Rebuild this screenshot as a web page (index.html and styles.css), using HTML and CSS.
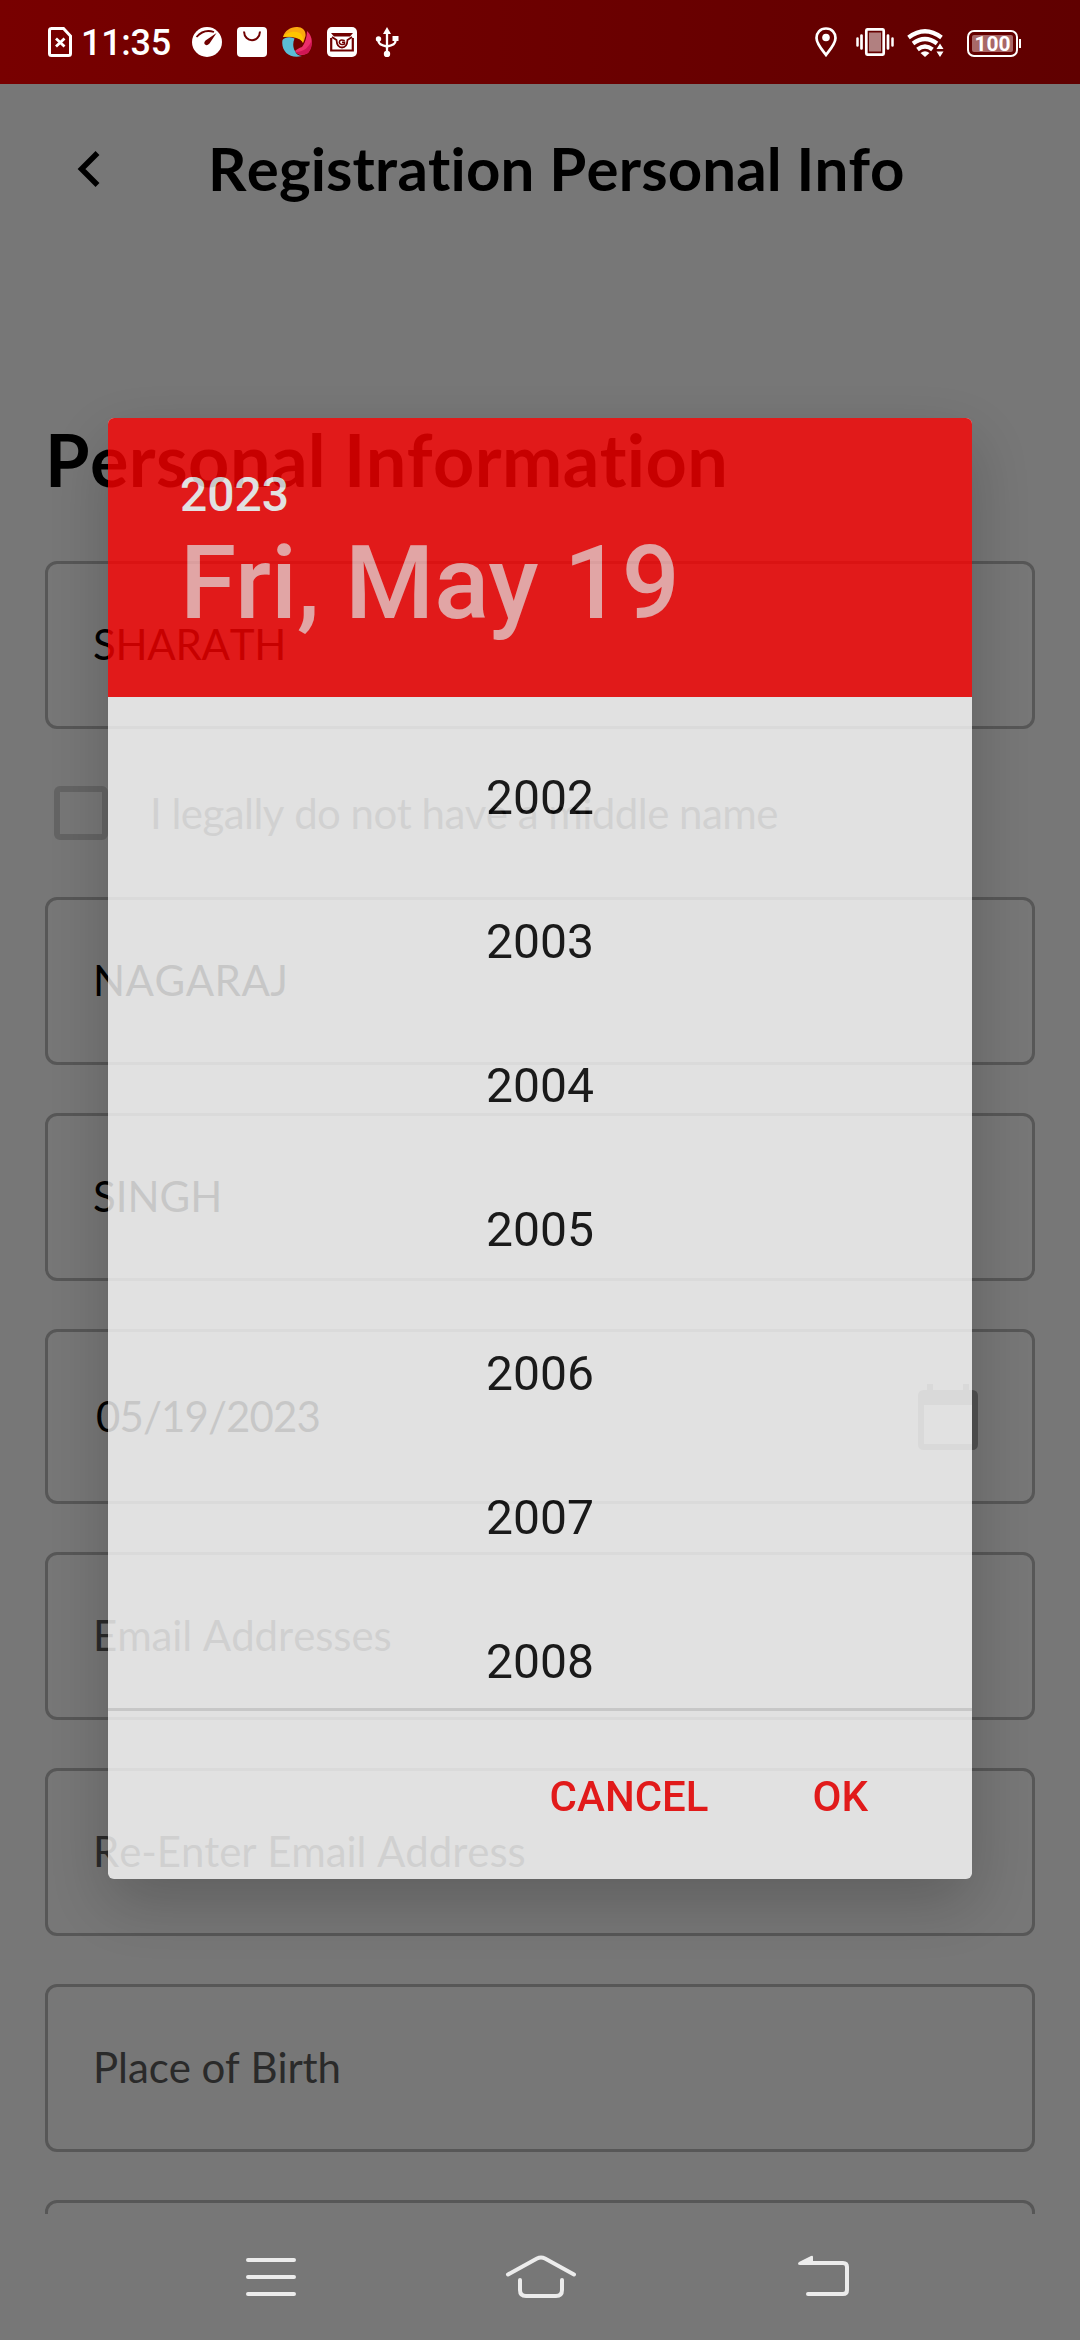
FILE: index.html
```html
<!DOCTYPE html>
<html lang="en">
<head>
<meta charset="utf-8">
<title>Registration Personal Info</title>
<link rel="stylesheet" href="styles.css">
</head>
<body>
<div class="screen">
  <header class="status">
    <div class="status-left">
      <svg class="i-sim" width="24" height="30" viewBox="0 0 24 30"><path d="M3 1.500H15.500L22.500 9V26.500Q22.500 28.500 20.500 28.500H3.500Q1.500 28.500 1.500 26.500V3.500Q1.500 1.500 3.500 1.500Z" fill="none" stroke="#fff" stroke-width="3"/><path d="M8 11.500L16.500 19.500M16.500 11.500L8 19.500" stroke="#fff" stroke-width="2.800"/></svg>
      <span class="clock">11:35</span>
      <svg width="30" height="30" viewBox="0 0 30 30"><circle cx="15" cy="15" r="15" fill="#fff"/><path d="M4.500 10Q12 1.500 22 5" fill="none" stroke="#700000" stroke-width="1.800"/><path d="M24.500 6L17.500 16.500Q14.500 19.500 12.500 17Q11.500 14.500 15 12.500Z" fill="#700000"/></svg>
      <svg width="30" height="30" viewBox="0 0 30 30"><rect width="30" height="30" rx="4" fill="#fff"/><path d="M7 4.500C7.500 16 22.500 16 23 4.500" fill="none" stroke="#700000" stroke-width="2"/></svg>
      <svg width="30" height="30" viewBox="0 0 30 30"><path d="M1 10C3 3 10 -1 17 0.300C22 1 24 5 23.500 9C22.500 12 22 14 21 16C20 12 16 8.500 1 10Z" fill="#fba90f"/><path d="M1 10C4 6 11 3 18 6Q22 9 21 16C19.500 11.500 11 9 1 10Z" fill="#ffc400"/><path d="M25 4C31 9 31.500 19 26 26C21 29 16 28.500 13 24C15 22 17 21 20 20C22.500 17 25 11 25 4Z" fill="#ec2f6a"/><path d="M30 13C30 19 29 23 26 26C21 28.500 17 28 14 25C22 25 27 20 30 13Z" fill="#cf1654"/><path d="M0.500 13C3 10 8 9.500 12.500 11.500C10.500 16 11 21 13 24C14 27 16 28.500 20 29C8 32.500 -1.500 24 0.500 13Z" fill="#5bbcd6"/></svg>
      <svg width="30" height="30" viewBox="0 0 30 30"><rect width="30" height="30" rx="5" fill="#fff"/><path d="M4 6H26L23 9.500H7Z" fill="#700000"/><path d="M4.200 11V23.500H25.800V11" fill="none" stroke="#700000" stroke-width="2.200"/><path d="M5 10L9.500 13Q10 20.500 15 20.500T20.500 13L25 10" fill="none" stroke="#700000" stroke-width="1.800"/><path d="M17.800 13.600Q12.300 11.800 12.300 15.500Q13 18.500 17.500 17V15.300H15" fill="none" stroke="#700000" stroke-width="1.500"/></svg>
      <svg class="i-usb" width="24" height="30" viewBox="0 0 24 30"><path d="M12 5V27M3.500 12V14Q3.500 18 12 19.500Q20.500 18 20.500 14V11" fill="none" stroke="#fff" stroke-width="2.300"/><path d="M12 0L16 7H8Z" fill="#fff"/><circle cx="12" cy="27" r="3.200" fill="#fff"/><circle cx="3.500" cy="12" r="2.700" fill="#fff"/><path d="M17.500 9H23.500V14H17.500Z" fill="#fff"/></svg>
    </div>
    <div class="status-right">
      <svg class="i-pin" width="22" height="30" viewBox="0 0 22 30"><path d="M11 1.500C5 1.500 1.500 6 1.500 11C1.500 16.500 6 21.500 11 28C16 21.500 20.500 16.500 20.500 11C20.500 6 17 1.500 11 1.500Z" fill="none" stroke="#fff" stroke-width="2.700"/><circle cx="11" cy="10.500" r="3.800" fill="#fff"/></svg>
      <svg class="i-vib" width="38" height="28" viewBox="0 0 38 28"><rect x="10.300" y="1.300" width="17.400" height="25.400" rx="1.500" fill="none" stroke="#fff" stroke-width="2.700"/><rect x="13" y="4.500" width="12" height="19" fill="#b18080"/><path d="M5.500 7.500V20.500M32 7.500V20.500" stroke="#fff" stroke-width="2.700" stroke-linecap="round"/><path d="M1.500 10.500V17.500M36.500 10.500V17.500" stroke="#fff" stroke-width="2.500" stroke-linecap="round"/></svg>
      <svg class="i-wifi" width="37" height="28" viewBox="0 0 37 28"><g fill="none" stroke="#fff" stroke-width="4.200"><path d="M1.500 8.500Q18 -4 34.500 8.500"/><path d="M6 14.500Q18 5.500 30 14.500"/><path d="M10.500 20.500Q18 14.500 25.500 20.500"/></g><path d="M13.500 24Q18 20.500 22.500 24L18 28Z" fill="#fff"/><path d="M33 14.500L36.500 20H29.500ZM33 28L36.500 22.500H29.500Z" fill="#fff"/></svg>
      <div class="battery"><span class="charge">100</span></div>
    </div>
  </header>

  <main class="page">
    <div class="appbar">
      <svg class="back" width="24" height="38" viewBox="0 0 24 38"><path d="M20.500 3L4.500 19L20.500 35" fill="none" stroke="#000" stroke-width="5.500"/></svg>
      <h1 class="title">Registration Personal Info</h1>
    </div>
    <h2 class="section">Personal Information</h2>
    <div class="form">
      <div class="field first-name">SHARATH</div>
      <label class="check"><span class="box"></span><span>I legally do not have a middle name</span></label>
      <div class="field middle-name">NAGARAJ</div>
      <div class="field">SINGH</div>
      <div class="field date"><span>05/19/2023</span>
        <svg width="60" height="66" viewBox="0 0 60 66"><path fill-rule="evenodd" d="M9 0H15V6H45V0H51V6H54Q60 6 60 12V60Q60 66 54 66H6Q0 66 0 60V12Q0 6 6 6H9ZM6 21V60H54V21Z" fill="#525252"/></svg>
      </div>
      <div class="field hint">Email Addresses</div>
      <div class="field hint">Re-Enter Email Address</div>
      <div class="field hint">Place of Birth</div>
      <div class="field hint"></div>
    </div>
  </main>

  <nav class="nav">
    <svg width="50" height="38" viewBox="0 0 50 38"><path d="M2 2H48M2 19H48M2 36H48" stroke="#ececec" stroke-width="4" stroke-linecap="round"/></svg>
    <svg class="home" width="72" height="46" viewBox="0 0 72 46"><g fill="none" stroke="#ececec" stroke-width="4" stroke-linecap="round"><path d="M3 20.500L32 4.500Q36 2.500 40 4.500L69 20.500"/><path d="M15 26V36Q15 42 21 42H51Q57 42 57 36V26"/></g></svg>
    <svg class="return" width="52" height="42" viewBox="0 0 52 42"><path d="M6 9H45Q49 9 49 13V36Q49 40 45 40H10" fill="none" stroke="#ececec" stroke-width="4" stroke-linecap="round" transform="translate(0 -1)"/><path d="M0 8.500Q0 7.500 2 6.500L13 1Q15 0 15 2V10H2Q0 10 0 8.500Z" fill="#ececec"/></svg>
  </nav>

  <section class="dialog">
    <div class="dialog-head">
      <div class="head-year">2023</div>
      <div class="head-date">Fri, May 19</div>
    </div>
    <div class="years">
      <div class="year">2002</div>
      <div class="year">2003</div>
      <div class="year">2004</div>
      <div class="year">2005</div>
      <div class="year">2006</div>
      <div class="year">2007</div>
      <div class="year">2008</div>
    </div>
    <div class="actions"><span>CANCEL</span><span>OK</span></div>
  </section>
</div>
</body>
</html>
```

FILE: styles.css
```css
* { box-sizing: border-box; }
body { margin: 0; }
.screen {
  position: relative;
  display: flex;
  flex-direction: column;
  width: 1080px;
  height: 2340px;
  overflow: hidden;
  background: #777;
  color: #000;
  font-family: Lato, sans-serif;
}
svg { display: block; flex: none; }

/* status bar */
.status {
  flex: none;
  height: 84px;
  display: flex;
  justify-content: space-between;
  padding: 27px 60px 0 48px;
  background: linear-gradient(90deg, #780000, #600000);
  color: #fff;
  font-family: Roboto, sans-serif;
}
.status-left { display: flex; gap: 15px; }
.clock {
  width: 90px;
  margin: 0 6px 0 -6px;
  font-size: 36px;
  font-weight: 500;
  line-height: 32px;
  letter-spacing: -.3px;
  white-space: nowrap;
}
.i-usb { margin-left: 3px; }
.status-right { display: flex; align-items: flex-start; }
.i-vib { margin: 1px 0 0 19px; }
.i-wifi { margin: 2px 0 0 13px; }
.battery {
  position: relative;
  width: 51px;
  height: 27px;
  margin: 3px 2px 0 23px;
  padding: 3px;
  border: 2px solid #fff;
  border-radius: 7px;
}
.battery::after {
  content: "";
  position: absolute;
  right: -5px;
  top: 7px;
  width: 2px;
  height: 9px;
  background: #fff;
}
.charge {
  display: block;
  height: 17px;
  border-radius: 2px;
  background: #a86868;
  font-size: 21px;
  font-weight: 700;
  line-height: 18px;
  text-align: center;
}

/* form page */
.page {
  flex: none;
  height: 2130px;
  overflow: hidden;
  padding: 0 45px;
  font-variant-ligatures: none;
  font-kerning: none;
}
.appbar {
  display: flex;
  height: 168px;
  padding: 0 0 0 32px;
}
.back { margin-top: 66px; }
.title {
  margin: 48px 0 0 107px;
  font-size: 60px;
  font-weight: 700;
  line-height: 72px;
  letter-spacing: .13px;
  white-space: nowrap;
}
.section {
  margin: 164px 0 59px;
  font-size: 72px;
  font-weight: 700;
  line-height: 86px;
  letter-spacing: .4px;
}
.form {
  display: flex;
  flex-direction: column;
  gap: 48px;
}
.field {
  flex: none;
  height: 168px;
  padding: 55px 45px 0;
  border: 3px solid #575757;
  border-radius: 12px;
  font-size: 42px;
  line-height: 51px;
}
.first-name { letter-spacing: -.25px; }
.middle-name { letter-spacing: .5px; }
.hint { color: #2a2a2a; letter-spacing: -.1px; }
.check {
  display: flex;
  height: 72px;
  padding-left: 9px;
  gap: 42px;
  color: #2f2f2f;
  font-size: 42px;
  line-height: 51px;
}
.check span:last-child { margin-top: 11px; letter-spacing: -.54px; }
.box {
  width: 54px;
  height: 54px;
  margin-top: 9px;
  border: 6px solid #646464;
  border-radius: 6px;
}
.date {
  display: flex;
  justify-content: space-between;
  height: 175px;
  padding: 52px 54px 0 48px;
}
.date span { margin-top: 7px; letter-spacing: -.9px; }

/* system navigation */
.nav {
  flex: 1;
  display: flex;
  align-items: flex-start;
  padding: 44px 0 0 246px;
}
.home { margin: -4px 0 0 209px; }
.return { margin: -3px 0 0 221px; }

/* year picker */
.dialog {
  position: absolute;
  left: 108px;
  top: 418px;
  width: 864px;
  height: 1461px;
  display: flex;
  flex-direction: column;
  overflow: hidden;
  border-radius: 6px;
  background: #fff;
  box-shadow: 0 24px 62px rgba(0, 0, 0, .26);
  opacity: .784;
  font-family: Roboto, sans-serif;
}
.dialog-head {
  flex: none;
  height: 279px;
  padding: 49px 72px 0;
  background: #f00;
  color: #fff;
  font-weight: 500;
}
.head-year { font-size: 48px; line-height: 56px; }
.head-date {
  color: rgba(255, 255, 255, .7);
  font-size: 102px;
  line-height: 120px;
}
.years {
  flex: none;
  height: 1014px;
  padding-top: 29px;
  overflow: hidden;
  border-bottom: 3px solid #dedede;
}
.year {
  height: 144px;
  font-size: 48px;
  line-height: 144px;
  text-align: center;
}
.actions {
  display: flex;
  justify-content: flex-end;
  gap: 104px;
  padding: 61px 104px 0 0;
  color: #f00;
  font-size: 42px;
  font-weight: 500;
  line-height: 50px;
}
```
